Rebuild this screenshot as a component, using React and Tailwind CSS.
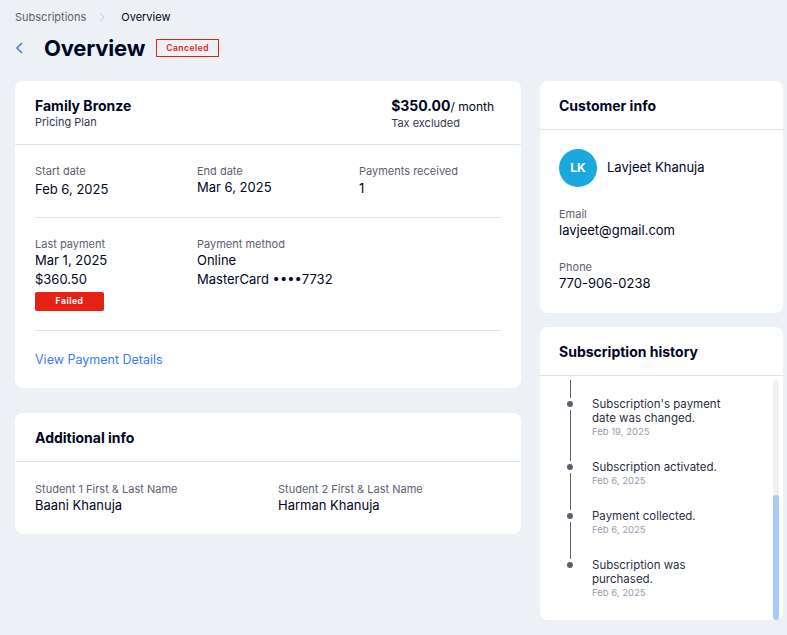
import React from "react";

const font = { fontFamily: "Inter, 'Noto Sans', sans-serif" };

function Label({ children }) {
  return <div className="text-[11px] leading-[14px] text-[#5d6071]">{children}</div>;
}
function Value({ children }) {
  return <div className="text-[13px] leading-[19px] text-[#000624]">{children}</div>;
}

function TimelineItem({ title, date, topLine = 22, topOffset = 0, lineAfter = true }) {
  return (
    <div className="flex">
      <div className="w-[20px] ml-[20px] flex flex-col items-center">
        <div className="w-px bg-[#5d6071]" style={{ height: topLine, marginTop: topOffset }} />
        <div className="w-[6px] h-[6px] rounded-full bg-[#5d6071] my-[3px]" />
        {lineAfter ? <div className="flex-1 w-px bg-[#5d6071]" /> : <div className="flex-1" />}
      </div>
      <div className="ml-[12px] pt-[21px]">
        <div className="text-[11.5px] leading-[14px] text-[#2b2f45] w-[140px]">{title}</div>
        <div className="text-[9.5px] leading-[14px] text-[#9a9cab]">{date}</div>
      </div>
    </div>
  );
}

export default function App() {
  return (
    <div style={font} className="w-[787px] h-[635px] bg-[#edf0f4] overflow-hidden">
      <div className="pl-[15px] pt-[9px] flex items-center text-[11px] leading-[16px]">
        <span className="text-[#5d6071]">Subscriptions</span>
        <svg width="20" height="12" viewBox="0 0 20 12" className="ml-[6px] mr-[9px]">
          <path d="M8 2 L12 6 L8 10" fill="none" stroke="#c8cad3" strokeWidth="1" />
        </svg>
        <span className="text-[#000624]">Overview</span>
      </div>
      <div className="pl-[14px] mt-[10px] flex items-center h-[26px]">
        <svg width="12" height="14" viewBox="0 0 12 14">
          <path d="M8 2 L3 7 L8 12" fill="none" stroke="#3b7cf0" strokeWidth="1.5" />
        </svg>
        <span className="ml-[18px] text-[22px] font-bold text-[#000624] tracking-[-0.2px]">Overview</span>
        <span className="ml-[11px] -mt-[1px] border border-[#e62214] text-[#e62214] text-[8.5px] font-semibold leading-[16px] px-[9px] tracking-[0.5px]">
          Canceled
        </span>
      </div>

      <div className="flex pl-[15px] gap-[19px] mt-[20px]">
        <div className="w-[506px] flex flex-col gap-[25px]">
          <div className="bg-white rounded-[8px]">
            <div className="flex justify-between pl-[20px] pr-[27px] pt-[16px] pb-[14px] border-b border-[#dfe3ea]">
              <div>
                <div className="text-[14px] font-bold leading-[18px] text-[#000624]">Family Bronze</div>
                <div className="text-[11px] leading-[14px] text-[#333853]">Pricing Plan</div>
              </div>
              <div className="whitespace-nowrap">
                <div className="text-[14px] leading-[18px] text-[#000624]">
                  <span className="text-[14px] font-bold">$350.00</span>
                  <span className="text-[12px]">/ month</span>
                </div>
                <div className="text-[11px] leading-[14px] text-[#333853]">Tax excluded</div>
              </div>
            </div>
            <div className="px-[20px]">
              <div className="flex pt-[19px] pb-[18px] border-b border-[#dfe3ea]">
                <div className="w-[162px]">
                  <Label>Start date</Label>
                  <div className="mt-[2px]"><Value>Feb 6, 2025</Value></div>
                </div>
                <div className="w-[162px]">
                  <Label>End date</Label>
                  <Value>Mar 6, 2025</Value>
                </div>
                <div>
                  <Label>Payments received</Label>
                  <div className="mt-[1px]"><Value>1</Value></div>
                </div>
              </div>
              <div className="flex pt-[19px] pb-[19px] border-b border-[#dfe3ea]">
                <div className="w-[162px]">
                  <Label>Last payment</Label>
                  <Value>Mar 1, 2025</Value>
                  <Value>$360.50</Value>
                  <div className="mt-[3px] w-[69px] h-[19px] bg-[#e62214] rounded-[2px] text-white text-[8.5px] font-bold flex items-center justify-center tracking-[0.5px]">
                    Failed
                  </div>
                </div>
                <div>
                  <Label>Payment method</Label>
                  <Value>Online</Value>
                  <Value>MasterCard ••••7732</Value>
                </div>
              </div>
              <div className="pt-[20px] pb-[19px] text-[12.5px] leading-[18px] text-[#3b7cf0]">
                View Payment Details
              </div>
            </div>
          </div>

          <div className="bg-white rounded-[8px]">
            <div className="px-[20px] pt-[16px] pb-[14px] border-b border-[#dfe3ea] text-[14px] font-bold leading-[18px] text-[#000624]">
              Additional info
            </div>
            <div className="flex px-[20px] pt-[20px] pb-[19px]">
              <div className="w-[243px]">
                <Label>Student 1 First &amp; Last Name</Label>
                <Value>Baani Khanuja</Value>
              </div>
              <div>
                <Label>Student 2 First &amp; Last Name</Label>
                <Value>Harman Khanuja</Value>
              </div>
            </div>
          </div>
        </div>

        <div className="w-[243px] flex flex-col gap-[14px]">
          <div className="bg-white rounded-[8px]">
            <div className="px-[19px] pt-[16px] pb-[14px] border-b border-[#dfe3ea] text-[14px] font-bold leading-[18px] text-[#000624]">
              Customer info
            </div>
            <div className="px-[19px] pt-[19px] pb-[20px]">
              <div className="flex items-center">
                <div className="w-[38px] h-[38px] rounded-full bg-[#1aa8df] text-white text-[12px] font-bold flex items-center justify-center">
                  LK
                </div>
                <div className="ml-[10px] text-[13px] text-[#000624]">Lavjeet Khanuja</div>
              </div>
              <div className="mt-[20px]">
                <Label>Email</Label>
                <Value>lavjeet@gmail.com</Value>
              </div>
              <div className="mt-[20px]">
                <Label>Phone</Label>
                <Value>770-906-0238</Value>
              </div>
            </div>
          </div>

          <div className="bg-white rounded-[8px] h-[293px] flex flex-col">
            <div className="px-[19px] pt-[16px] pb-[14px] border-b border-[#dfe3ea] text-[14px] font-bold leading-[18px] text-[#000624]">
              Subscription history
            </div>
            <div className="flex-1 flex overflow-hidden">
              <div className="flex-1 overflow-hidden">
                <div className="flex flex-col">
                  <TimelineItem
                    title="Subscription's payment date was changed."
                    date="Feb 19, 2025"
                    topLine={18}
                    topOffset={4}
                  />
                  <TimelineItem title="Subscription activated." date="Feb 6, 2025" />
                  <TimelineItem title="Payment collected." date="Feb 6, 2025" />
                  <TimelineItem title="Subscription was purchased." date="Feb 6, 2025" lineAfter={false} />
                </div>
              </div>
              <div className="w-[6px] mr-[4px] mt-[4px] rounded-full bg-[#f0f0f1] flex flex-col justify-end">
                <div className="h-[125px] rounded-full bg-[#a8c9fd]" />
              </div>
            </div>
          </div>
        </div>
      </div>
    </div>
  );
}
